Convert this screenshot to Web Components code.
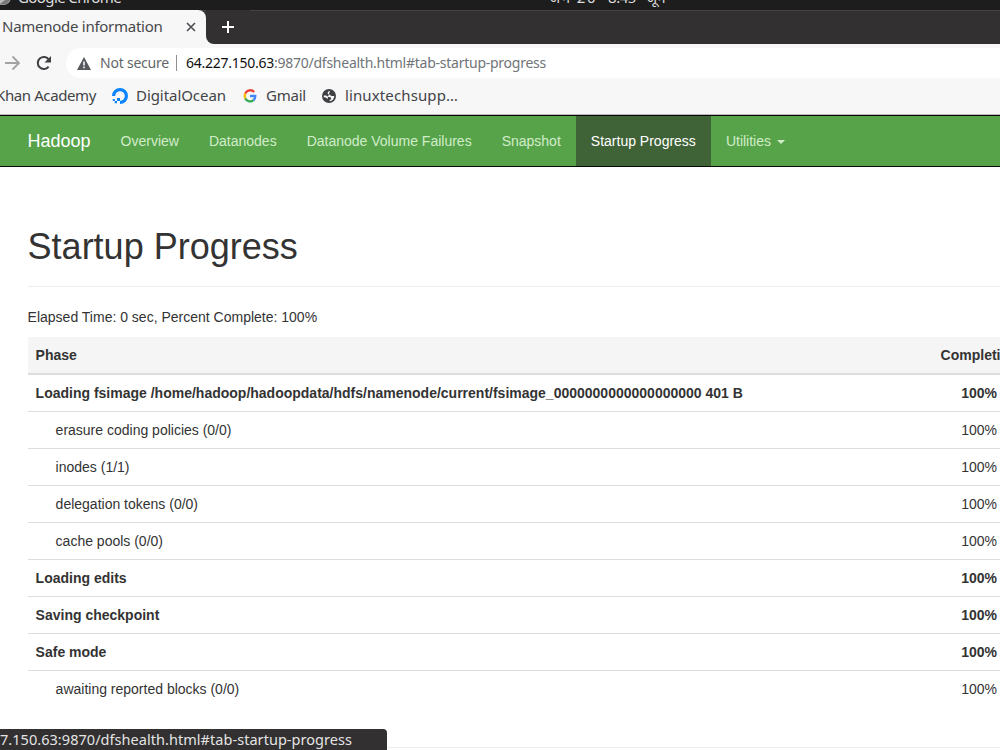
<!DOCTYPE html>
<html lang="en">
<head>
<meta charset="utf-8">
<title>Namenode information</title>
<style>
    html, body { margin: 0; height: 750px; overflow: hidden; }
    body { width: 1000px; background: #fff; font: 14px/20px "Liberation Sans", Arial, sans-serif; color: #333; }
</style>
</head>
<body>
<browser-window>
    <desktop-bar slot="desktop"></desktop-bar>
    <tab-strip slot="tabs" label="Namenode information"></tab-strip>
    <address-bar slot="toolbar" host="64.227.150.63" path=":9870/dfshealth.html#tab-startup-progress"></address-bar>
    <bookmarks-bar slot="bookmarks"></bookmarks-bar>
    <hadoop-navbar active="Startup Progress"></hadoop-navbar>
    <startup-progress></startup-progress>
    <status-bubble slot="status" url="7.150.63:9870/dfshealth.html#tab-startup-progress"></status-bubble>
</browser-window>

<script>
class BaseElement extends HTMLElement {
    constructor() {
        super();
        this.attachShadow({ mode: "open" });
    }

    render(html) {
        const template = document.createElement("template");
        template.innerHTML = html;
        this.shadowRoot.appendChild(template.content.cloneNode(true));
    }
}

// Label of the browser interface, tracked so that it takes exactly `width` pixels
class UiLabel extends BaseElement {
    connectedCallback() {
        this.render(`
            <style>
                :host { display: block; flex: none; white-space: nowrap; font-family: "Noto Sans", "Open Sans", sans-serif; }
                span { display: inline-block; }
            </style>
            <span><slot></slot></span>
        `);
        const width = Number(this.getAttribute("width"));
        const span = this.shadowRoot.querySelector("span");
        const natural = span.getBoundingClientRect().width;
        span.style.letterSpacing = (width - natural) / this.textContent.length + "px";
        this.style.width = width + "px";
    }
}

class BrowserWindow extends BaseElement {
    connectedCallback() {
        this.render(`
            <style>
                :host { display: flex; flex-direction: column; position: relative; height: 750px; overflow: hidden; }
                main { flex: 1; }
            </style>
            <slot name="desktop"></slot>
            <slot name="tabs"></slot>
            <slot name="toolbar"></slot>
            <slot name="bookmarks"></slot>
            <main><slot></slot></main>
            <slot name="status"></slot>
        `);
    }
}

class DesktopBar extends BaseElement {
    connectedCallback() {
        this.render(`
            <style>
                :host { display: flex; height: 10px; background: #1d1d1d; color: #ddd; overflow: hidden; font-size: 15px; line-height: 20px; }
                ui-label { margin-top: -13px; }
                .app { margin-left: 7px; }
                .clock { display: flex; margin-left: 428px; }
                .time { margin: -13px 10px 0 11px; }
                svg { flex: none; }
            </style>
            <svg width="11" height="10"><circle cx="3" cy="-3" r="8" fill="#bbb"/><path d="M0 4a8 8 0 0 0 10-4H5z" fill="#777"/></svg>
            <ui-label class="app" width="103">Google Chrome</ui-label>
            <div class="clock">
                <ui-label width="48">जन 20</ui-label>
                <ui-label class="time" width="28">8:45</ui-label>
                <ui-label width="20">जून</ui-label>
            </div>
        `);
    }
}

class TabStrip extends BaseElement {
    connectedCallback() {
        this.render(`
            <style>
                :host { display: flex; height: 34px; background: #323031; box-shadow: inset 0 1px #454344; }
                .tab { display: flex; align-items: center; width: 206px; background: #f7f7f7; border-radius: 0 8px 0 0; box-sizing: border-box; padding-left: 2px; }
                ui-label { padding-bottom: 2px; font-size: 15px; line-height: 32px; color: #45474a; }
                .close { margin-left: 23px; }
                .add { background: #f7f7f7; }
                .add svg { display: block; background: #323031; border-radius: 0 0 0 8px; }
            </style>
            <div class="tab">
                <ui-label width="160.5">${this.getAttribute("label")}</ui-label>
                <svg class="close" width="10" height="10"><path d="M1 1l8 8M9 1l-8 8" stroke="#4b4d50" stroke-width="1.6"/></svg>
            </div>
            <div class="add">
                <svg width="44" height="34"><path d="M22 11v12M16 17h12" stroke="#fff" stroke-width="2"/></svg>
            </div>
        `);
    }
}

class AddressBar extends BaseElement {
    connectedCallback() {
        this.render(`
            <style>
                :host { display: flex; align-items: center; height: 38px; background: #f7f7f7; }
                svg { flex: none; }
                .reload { margin-left: 16px; }
                .field { display: flex; align-items: center; flex: 1; height: 30px; margin-left: 14px; padding-left: 11px; border-radius: 15px 0 0 15px; background: #fff; }
                ui-label { font-size: 14px; line-height: 30px; color: #707478; }
                .secure { margin-left: 9px; color: #63666a; }
                .line { width: 1px; height: 16px; margin: 0 9px 0 7px; background: #8c8f93; }
                .host { color: #111; }
            </style>
            <svg width="20" height="16"><path d="M5 8h14M12.5 1.5L19 8l-6.500 6.500" fill="none" stroke="#a3a3a3" stroke-width="1.8"/></svg>
            <svg class="reload" width="16" height="16"><path d="M12.600 11.600a6 6 0 1 1 .3-6.800" fill="none" stroke="#3e4043" stroke-width="2"/><path d="M15 1v6.500H8.500z" fill="#3e4043"/></svg>
            <div class="field">
                <svg width="14" height="13"><path d="M7 0l7 13H0z" fill="#55585c"/><path d="M7 4.500v4M7 9.500v1.700" stroke="#fff" stroke-width="1.500"/></svg>
                <ui-label class="secure" width="69">Not secure</ui-label>
                <div class="line"></div>
                <ui-label class="host" width="88">${this.getAttribute("host")}</ui-label>
                <ui-label width="272">${this.getAttribute("path")}</ui-label>
            </div>
        `);
    }
}

class BookmarksBar extends BaseElement {
    connectedCallback() {
        this.render(`
            <style>
                :host { display: flex; align-items: center; height: 28px; padding-bottom: 4px; background: #f7f7f7; border-bottom: 1px solid #b9b7b9; overflow: hidden; }
                ui-label { padding-bottom: 2px; font-size: 15px; line-height: 26px; color: #424447; }
                svg { flex: none; }
                .khan { margin-left: -4px; }
                .ocean { margin: 0 8px 0 16px; }
                .google { margin: 0 9px 0 17px; }
                .globe { margin: 0 9px 0 16px; }
            </style>
            <ui-label class="khan" width="100">Khan Academy</ui-label>
            <svg class="ocean" width="16" height="16" viewBox="0 0 16 16">
                <path d="M8 14.400A6.400 6.400 0 1 0 1.600 8" fill="none" stroke="#0a84ff" stroke-width="3.200"/>
                <path d="M5 10h3v3H5zM2.700 13H5v2.300H2.700zM.8 11h2v2h-2z" fill="#0a84ff"/>
            </svg>
            <ui-label width="90">DigitalOcean</ui-label>
            <svg class="google" width="14" height="14" viewBox="0 0 14 14" fill="none" stroke-width="2.300">
                <path d="M11.200 3.100A5.300 5.300 0 0 0 2.300 4.600" stroke="#ea4335"/>
                <path d="M2.300 4.600a5.300 5.300 0 0 0 0 4.800" stroke="#fbbc05"/>
                <path d="M2.300 9.400a5.300 5.300 0 0 0 8.200 1.700" stroke="#34a853"/>
                <path d="M10.500 11.100A5 5 0 0 0 12.300 7H7" stroke="#4285f4"/>
            </svg>
            <ui-label width="40">Gmail</ui-label>
            <svg class="globe" width="14" height="14" viewBox="0 0 14 14">
                <circle cx="7" cy="7" r="7" fill="#3e4043"/>
                <path d="M8 1.800C6.300 2.200 5.200 3.500 5.800 4.800c.5 1 2.200.4 2.600 1.500.3.800 1.600.9 3.900.7C12.200 10 10.200 12 7.600 12.300c-.4-1 .9-1.500 1.500-2.500.5-1-.6-1.900-2-1.900C5.600 7.900 5 6.700 3.800 6.500L1.800 6.400 1.800 8.200C3.500 8 5 8.800 5.400 10.200" fill="#f7f7f7"/>
            </svg>
            <ui-label width="113">linuxtechsupp…</ui-label>
        `);
    }
}

class HadoopNavbar extends BaseElement {
    connectedCallback() {
        const links = ["Overview", "Datanodes", "Datanode Volume Failures", "Snapshot", "Startup Progress", "Utilities"];
        const active = this.getAttribute("active");
        this.render(`
            <style>
                :host { display: block; height: 50px; background: #56a34a; border: solid #080808; border-width: 1px 0; }
                nav { display: flex; height: 50px; padding-left: 12.5px; line-height: 50px; }
                a { display: flex; align-items: center; padding: 0 15px; color: #d2ecc9; white-space: nowrap; }
                .brand { font-size: 18px; color: #fff; }
                .active { background: #3f6337; color: #fff; }
                .caret { margin: 2px 0 0 6px; border: 4px solid transparent; border-top-color: currentColor; border-bottom: 0; }
            </style>
            <nav>
                <a class="brand">Hadoop</a>
                ${links.map((text) => `<a class="${text === active ? "active" : ""}">${text}${text === "Utilities" ? '<span class="caret"></span>' : ""}</a>`).join("")}
            </nav>
        `);
    }
}

class ProgressRow extends BaseElement {
    connectedCallback() {
        this.render(`
            <style>
                :host { display: grid; grid-template-columns: 905px 93px; border-bottom: 1px solid #ddd; }
                div { padding: 8px; }
                .done { text-align: center; }
                :host([phase]) { font-weight: bold; }
                :host([step]) .name { padding-left: 28px; }
                :host([head]) { background: #f5f5f5; font-weight: bold; border-bottom-width: 2px; }
                :host([last]) { border-bottom: 0; }
            </style>
            <div class="name"><slot></slot></div>
            <div class="done">${this.getAttribute("done")}</div>
        `);
    }
}

class StartupProgress extends BaseElement {
    connectedCallback() {
        this.render(`
            <style>
                :host { display: block; width: 998px; padding: 60px 0 0 27.600px; }
                h1 { margin: 0; padding-bottom: 19px; border-bottom: 1px solid #eee; font-size: 36px; font-weight: 500; line-height: 40px; }
                p { margin: 20px 0 10px; }
                hr { margin: 40px 0 0; border: 0; border-top: 1px solid #eee; }
            </style>
            <h1>Startup Progress</h1>
            <p>Elapsed Time: 0 sec, Percent Complete: 100%</p>
            <progress-row head done="Completion">Phase</progress-row>
            <progress-row phase done="100%">Loading fsimage /home/hadoop/hadoopdata/hdfs/namenode/current/fsimage_0000000000000000000 401 B</progress-row>
            <progress-row step done="100%">erasure coding policies (0/0)</progress-row>
            <progress-row step done="100%">inodes (1/1)</progress-row>
            <progress-row step done="100%">delegation tokens (0/0)</progress-row>
            <progress-row step done="100%">cache pools (0/0)</progress-row>
            <progress-row phase done="100%">Loading edits</progress-row>
            <progress-row phase done="100%">Saving checkpoint</progress-row>
            <progress-row phase done="100%">Safe mode</progress-row>
            <progress-row step last done="100%">awaiting reported blocks (0/0)</progress-row>
            <hr>
        `);
    }
}

class StatusBubble extends BaseElement {
    connectedCallback() {
        this.render(`
            <style>
                :host { display: block; position: absolute; left: 0; bottom: 0; width: 387px; height: 21px; background: #323031; border-radius: 0 4px 0 0; overflow: hidden; }
                ui-label { font-size: 14.500px; line-height: 20px; color: #e4e4e4; }
            </style>
            <ui-label width="352">${this.getAttribute("url")}</ui-label>
        `);
    }
}

customElements.define("ui-label", UiLabel);
customElements.define("browser-window", BrowserWindow);
customElements.define("desktop-bar", DesktopBar);
customElements.define("tab-strip", TabStrip);
customElements.define("address-bar", AddressBar);
customElements.define("bookmarks-bar", BookmarksBar);
customElements.define("hadoop-navbar", HadoopNavbar);
customElements.define("progress-row", ProgressRow);
customElements.define("startup-progress", StartupProgress);
customElements.define("status-bubble", StatusBubble);
</script>
</body>
</html>
